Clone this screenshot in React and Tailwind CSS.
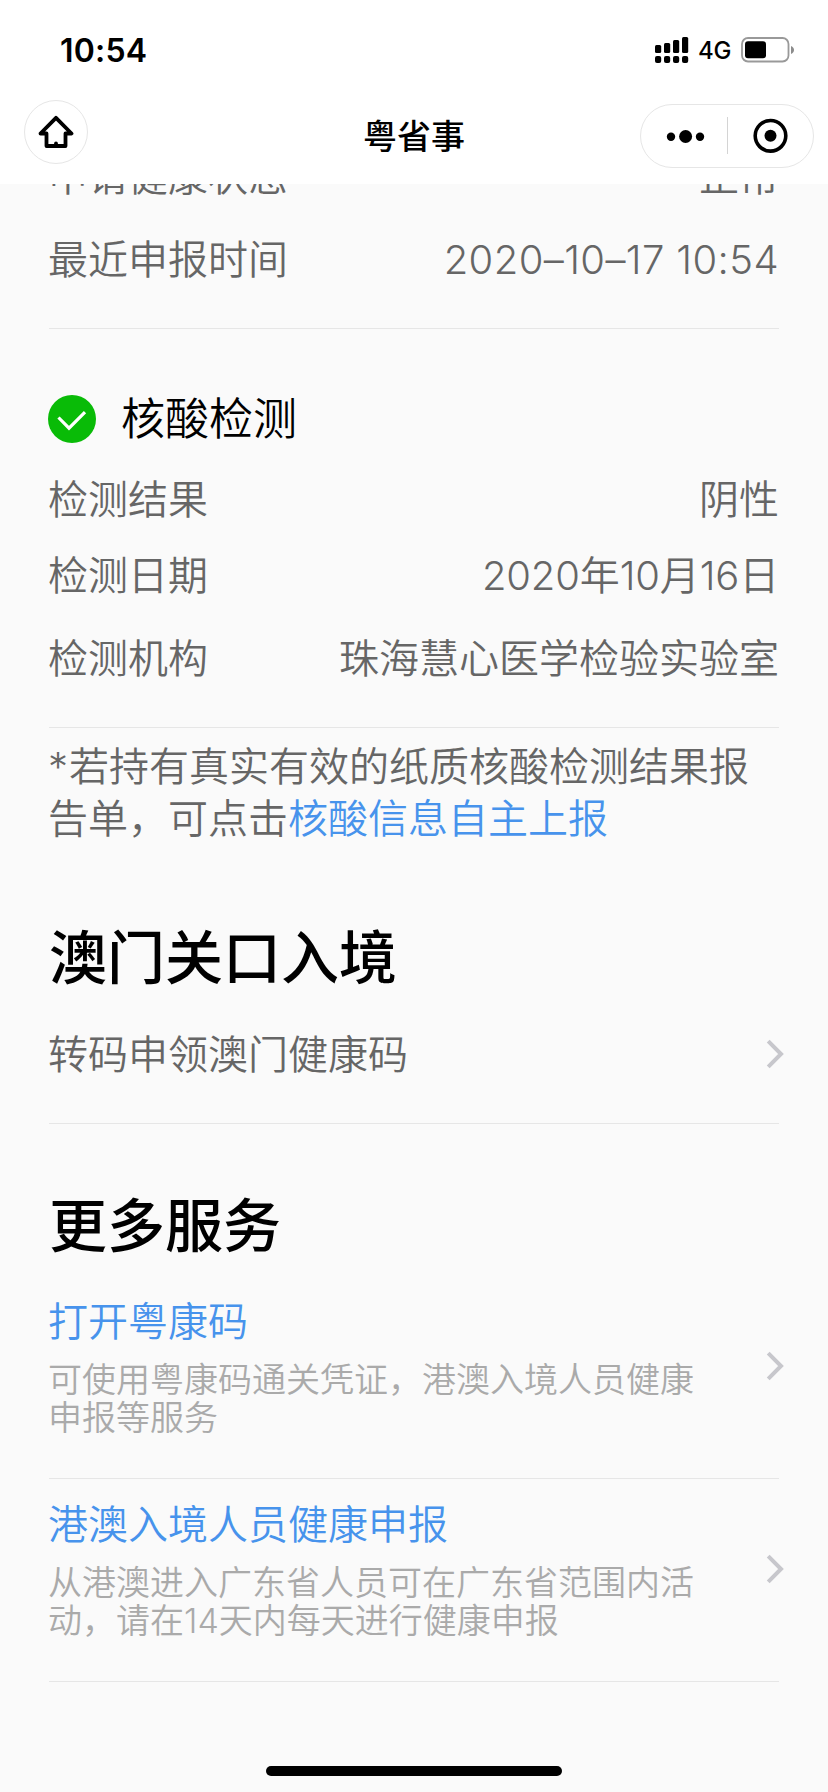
import React from "react";

const testRows = [
  { label: "检测结果", value: "阴性", height: "h-[76px]" },
  { label: "检测日期", value: "2020年10月16日", height: "h-[76px]", spacing: "tracking-[-0.15px]" },
  { label: "检测机构", value: "珠海慧心医学检验实验室", height: "h-[90px]" },
];

const services = [
  {
    title: "打开粤康码",
    lines: ["可使用粤康码通关凭证，港澳入境人员健康", "申报等服务"],
  },
  {
    title: "港澳入境人员健康申报",
    lines: ["从港澳进入广东省人员可在广东省范围内活", "动，请在14天内每天进行健康申报"],
  },
];

function Chevron() {
  return (
    <svg className="-mr-[5px] h-[30px] w-[18px] shrink-0" viewBox="0 0 18 30" fill="none">
      <path d="M2.2 2.2 15 15 2.2 27.8" stroke="#c7c7cc" strokeWidth="4" />
    </svg>
  );
}

function InfoRow({ label, value, height, spacing = "tracking-normal" }) {
  return (
    <div className={"flex items-center justify-between pt-[2px] whitespace-nowrap " + height}>
      <span className="-ml-px">{label}</span>
      <span className={spacing}>{value}</span>
    </div>
  );
}

function StatusBar() {
  return (
    <div className="flex h-[88px] items-center justify-between pt-3 pl-[60px] pr-[33px]">
      <span className="pt-[2px] text-[32px] leading-none font-semibold tracking-[0.2px]">10:54</span>
      <div className="flex items-center">
        <svg className="h-[26px] w-[34px]" viewBox="0 0 34 26">
          <rect x="0" y="8" width="6.200" height="8" rx="1.5" />
          <rect x="9" y="6" width="6.200" height="10" rx="1.5" />
          <rect x="18" y="3" width="6.200" height="13" rx="1.5" />
          <rect x="27" y="0" width="6.200" height="16" rx="1.5" />
          <rect x="0" y="19" width="6.200" height="7" rx="2" />
          <rect x="9" y="19" width="6.200" height="7" rx="2" />
          <rect x="18" y="19" width="6.200" height="7" rx="2" />
          <rect x="27" y="19" width="6.200" height="7" rx="2" />
        </svg>
        <span className="ml-[9px] w-[43px] pt-[2px] text-[24px] leading-none font-medium tracking-[-0.3px]">4G</span>
        <svg className="h-[26px] w-[54px]" viewBox="0 0 54 26">
          <rect x="1" y="1" width="46.5" height="23.5" rx="6" fill="none" stroke="#999" strokeWidth="1.8" />
          <rect x="4" y="4.2" width="21" height="17" rx="3" />
          <path d="M50 9c4 1.4 4 6.600 0 8z" fill="#8c8c8c" />
        </svg>
      </div>
    </div>
  );
}

function NavBar() {
  return (
    <div className="flex h-24 items-start justify-between pl-6 pr-[14px]">
      <div className="mt-3 flex h-16 w-[164px]">
        <div className="flex h-16 w-16 items-center justify-center rounded-full border border-[#e6e6e6]">
          <svg className="h-[34px] w-[36px]" viewBox="0 0 36 34" fill="none" stroke="#000" strokeWidth="3.800" strokeLinecap="round" strokeLinejoin="round">
            <path d="M8.500 18.500H2.500L18 2.800 33.500 18.500H27.500V31H8.500V18.500" />
            <path d="M18 28.500V30" />
          </svg>
        </div>
      </div>
      <h1 className="mt-[29px] text-[34px] leading-10 font-medium">粤省事</h1>
      <div className="mt-4 flex h-16 w-[174px] rounded-full border border-[#e6e6e6]">
        <svg className="h-[62px] w-[172px]" viewBox="0 0 172 62">
          <circle cx="30" cy="31.800" r="4.200" />
          <circle cx="44.600" cy="31.500" r="6.500" />
          <circle cx="59" cy="31.800" r="4.200" />
          <path d="M86.500 12v37" stroke="#d4d4d4" />
          <circle cx="129.500" cy="30.800" r="15.300" fill="none" stroke="#000" strokeWidth="3.600" />
          <circle cx="129.500" cy="30.800" r="6" />
        </svg>
      </div>
    </div>
  );
}

export default function App() {
  return (
    <div className="flex h-[1792px] w-[828px] flex-col overflow-hidden bg-[#fafafa] font-['Inter','Noto_Sans_CJK_SC',sans-serif] text-black">
      <header className="h-[184px] shrink-0 bg-white">
        <StatusBar />
        <NavBar />
      </header>

      <main className="flex-1 overflow-hidden px-[49px] text-[40px] font-[350] text-[#666]">
        {/* first row is scrolled half under the nav bar */}
        <div className="-mt-[49px] border-b border-[#e6e6e6] pb-[28px]">
          <InfoRow label="申请健康状态" value="正常" height="h-[82px]" />
          <InfoRow label="最近申报时间" value="2020–10–17 10:54" height="h-[83px]" spacing="tracking-[0.4px]" />
        </div>

        <section className="border-b border-[#e6e6e6] pt-[66px] pb-6">
          <div className="mb-[18px] -ml-px flex h-12 items-center">
            <svg className="h-12 w-12" viewBox="0 0 48 48" fill="none">
              <circle cx="24" cy="24" r="24" fill="#09bb07" />
              <path d="M10.500 22.500 21 33.200 37 17.200" stroke="#fff" strokeWidth="3.200" />
            </svg>
            <h3 className="ml-[25px] text-[44px] leading-none text-black">核酸检测</h3>
          </div>
          {testRows.map((row) => (
            <InfoRow key={row.label} {...row} />
          ))}
        </section>

        <p className="-ml-px pt-[13px] leading-[52px] whitespace-nowrap">
          <span className="tracking-[1px]">*</span>若持有真实有效的纸质核酸检测结果报
          <br />
          告单，可点击<a className="text-[#4793ec]">核酸信息自主上报</a>
        </p>

        <h2 className="mt-[73px] text-[58px] leading-[80px] font-medium text-black">澳门关口入境</h2>
        <div className="flex h-[126px] items-center justify-between border-b border-[#e6e6e6] pb-[13px]">
          <span className="-ml-px pt-px">转码申领澳门健康码</span>
          <Chevron />
        </div>

        <h2 className="mt-[62px] text-[58px] leading-[80px] font-medium text-black">更多服务</h2>
        <div className="mt-[10px]">
          {services.map((item) => (
            <div key={item.title} className="flex items-center justify-between border-b border-[#e6e6e6] pt-[19px] pb-[42px]">
              <div className="-ml-px pt-px whitespace-nowrap">
                <h4 className="leading-[52px] text-[#4793ec]">{item.title}</h4>
                <p className="mt-[13px] -mb-px text-[34px] leading-[38px] text-[#aaa]">
                  {item.lines[0]}
                  <br />
                  {item.lines[1]}
                </p>
              </div>
              <Chevron />
            </div>
          ))}
        </div>
      </main>

      <footer className="flex h-[26px] shrink-0 justify-center">
        <div className="h-[10px] w-[296px] rounded-full bg-black"></div>
      </footer>
    </div>
  );
}
